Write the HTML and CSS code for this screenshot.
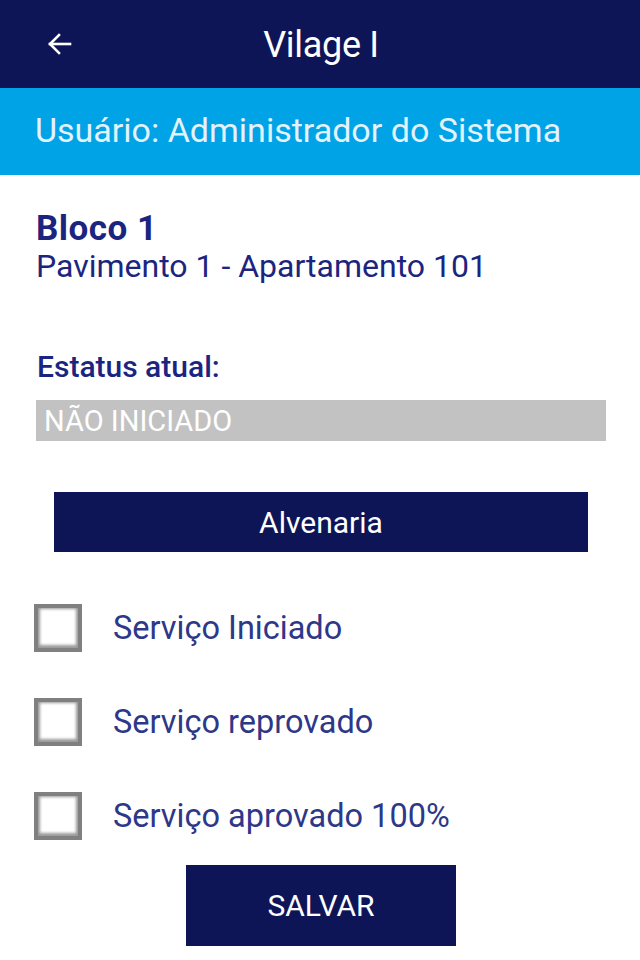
FILE: index.html
```html
<!DOCTYPE html>
<html lang="pt">
<head>
<meta charset="utf-8">
<title>Vilage I</title>
<link rel="stylesheet" href="styles.css">
</head>
<body>
<header class="topbar">
  <button class="back" aria-label="Voltar">
    <svg width="26" height="24" viewBox="0 0 26 24" fill="none" stroke="#fff" stroke-width="2.6" stroke-linecap="square">
      <path d="M24 12H4"/>
      <path d="M13 3L4 12L13 21"/>
    </svg>
  </button>
  <h1 class="title">Vilage I</h1>
</header>
<div class="userbar">Usuário: Administrador do Sistema</div>
<main class="content">
  <section class="unit">
    <h2 class="block">Bloco 1</h2>
    <p class="apt">Pavimento 1 - Apartamento 101</p>
  </section>
  <section class="status">
    <div class="status-label">Estatus atual:</div>
    <div class="status-value">NÃO INICIADO</div>
  </section>
  <div class="service">Alvenaria</div>
  <ul class="checks">
    <li class="check"><span class="box"></span><span class="check-label">Serviço Iniciado</span></li>
    <li class="check"><span class="box"></span><span class="check-label">Serviço reprovado</span></li>
    <li class="check"><span class="box"></span><span class="check-label">Serviço aprovado 100%</span></li>
  </ul>
  <div class="actions"><button class="save">SALVAR</button></div>
</main>
</body>
</html>
```
FILE: styles.css
```css
* { box-sizing: border-box; }
html, body { margin: 0; padding: 0; }
body {
  width: 640px;
  height: 960px;
  background: #fff;
  font-family: Roboto, "Liberation Sans", sans-serif;
  overflow: hidden;
}
.topbar {
  height: 88px;
  background: #0e1557;
  display: flex;
  align-items: center;
  justify-content: center;
  position: relative;
}
.back {
  position: absolute;
  left: 46px;
  top: 32px;
  padding: 0;
  border: 0;
  background: none;
  display: flex;
}
.title {
  margin: 0;
  color: #fff;
  font-weight: 400;
  font-size: 36px;
  line-height: 40px;
  letter-spacing: -0.3px;
  padding-left: 2px;
  padding-top: 2px;
}
.userbar {
  height: 87px;
  background: #00a3e6;
  color: #e3f2fb;
  font-size: 34px;
  line-height: 40px;
  padding-left: 35px;
  display: flex;
  align-items: center;
  padding-bottom: 4px;
}
.content {
  padding: 0 34px 0 34px;
}
.unit { padding-top: 35px; padding-left: 2px; }
.block {
  margin: 0;
  font-size: 35px;
  font-weight: 700;
  color: #1b2580;
  line-height: 38px;
  letter-spacing: 0.5px;
}
.apt {
  margin: 0;
  font-size: 32px;
  color: #1b2580;
  line-height: 36px;
}
.status { margin-top: 66px; padding-left: 2px; }
.status-label {
  font-size: 30px;
  font-weight: 500;
  color: #1b2580;
  line-height: 34px;
  padding-left: 1px;
}
.status-value {
  margin-top: 16px;
  width: 570px;
  height: 41px;
  background: #c2c2c2;
  color: #fff;
  font-size: 29px;
  padding-left: 8px;
  display: flex;
  align-items: center;
}
.service {
  margin: 51px 18px 0 20px;
  height: 60px;
  background: #0e1557;
  color: #fff;
  font-size: 30px;
  display: flex;
  align-items: center;
  justify-content: center;
}
.checks {
  list-style: none;
  margin: 52px 0 0 0;
  padding: 0;
  display: flex;
  flex-direction: column;
  gap: 46px;
}
.check {
  display: flex;
  align-items: center;
  gap: 31px;
  height: 48px;
}
.box {
  width: 48px;
  height: 48px;
  background: #fff;
  border: 4px solid #808080;
  box-shadow: inset 0 -1px 3px 2px rgba(0,0,0,0.4);
  flex: none;
}
.check-label {
  font-size: 32.5px;
  color: #2e3888;
}
.actions {
  display: flex;
  justify-content: center;
  margin-top: 25px;
  padding-left: 2px;
}
.save {
  width: 270px;
  height: 81px;
  border: 0;
  background: #0e1557;
  color: #fff;
  font-family: Roboto, "Liberation Sans", sans-serif;
  font-size: 30px;
}
```
